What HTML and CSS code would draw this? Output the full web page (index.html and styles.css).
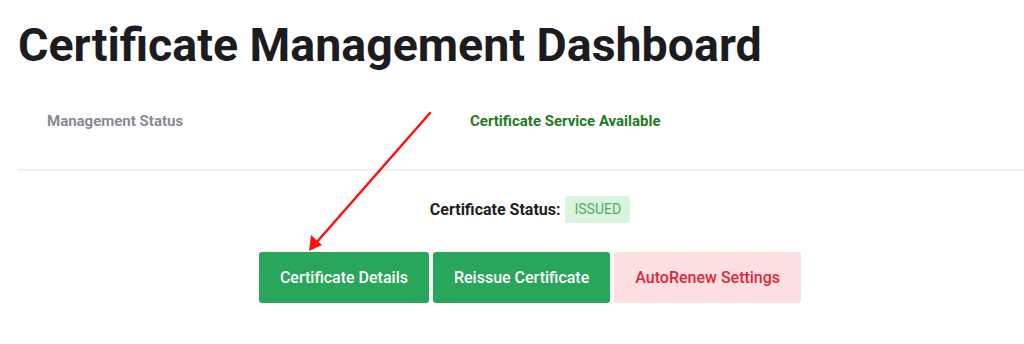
FILE: index.html
```html
<!DOCTYPE html>
<html lang="en">
	<head>
		<meta charset="UTF-8" />
		<meta name="viewport" content="width=device-width, initial-scale=1.0" />
		<title>Certificate Management Dashboard</title>
		<link rel="stylesheet" href="styles.css">
	</head>
	<body>
		<div class="page">
			<h1 class="title">Certificate Management Dashboard</h1>

			<div class="status-row">
				<div class="status-label">Management Status</div>
				<div class="status-value">Certificate Service Available</div>
			</div>

			<div class="cert-status">
				<span class="cert-label">Certificate Status:</span>
				<span class="badge">ISSUED</span>
			</div>

			<div class="actions">
				<button class="btn btn-green">Certificate Details</button>
				<button class="btn btn-green">Reissue Certificate</button>
				<button class="btn btn-pink">AutoRenew Settings</button>
			</div>
		</div>

		<!-- annotation arrow -->
		<svg class="arrow" width="1024" height="344" viewBox="0 0 1024 344">
			<line x1="430" y1="113" x2="316" y2="243" stroke="#ff1010" stroke-width="2.5" stroke-linecap="round" />
			<polygon points="309,251 311,235 322,245" fill="#ff1010" />
		</svg>
	</body>
</html>
```

FILE: styles.css
```css
* { margin: 0; padding: 0; box-sizing: border-box; }
html, body { overflow: hidden; }
body {
	font-family: Roboto, 'Liberation Sans', sans-serif;
	background: #fff;
	color: #1e1e22;
	position: relative;
	height: 344px;
}
.page {
	width: 1024px;
	margin-left: 18px;
}
.title {
	margin-top: 18px;
	font-size: 46.5px;
	line-height: 1.2;
	font-weight: 700;
	color: #1c1c1f;
}
.status-row {
	display: grid;
	grid-template-columns: 423px 1fr;
	padding: 37px 29px 38px;
	border-bottom: 2px solid #f1f1f1;
	font-size: 15px;
	line-height: 20px;
	font-weight: 700;
}
.status-label { color: #8a8a94; }
.status-value { color: #1f7a1f; }
.cert-status {
	margin-top: 25px;
	display: flex;
	justify-content: center;
	align-items: center;
	gap: 5px;
}
.cert-label {
	font-size: 16px;
	font-weight: 700;
	color: #1e1e22;
}
.badge {
	background: #dbf4e0;
	color: #4caf5f;
	font-size: 14px;
	line-height: 19px;
	padding: 4px 9px;
	border-radius: 3px;
}
.actions {
	margin-top: 29px;
	display: flex;
	justify-content: center;
	gap: 4px;
}
.btn {
	font-family: inherit;
	font-size: 16px;
	line-height: 19px;
	font-weight: 500;
	padding: 16px 21px;
	border: none;
	border-radius: 3px;
	cursor: pointer;
}
.btn-green {
	background: #28a65b;
	color: #fff;
}
.btn-pink {
	background: #fbdfe1;
	color: #e0283c;
}
.arrow {
	position: absolute;
	top: 0;
	left: 0;
	pointer-events: none;
}
```
